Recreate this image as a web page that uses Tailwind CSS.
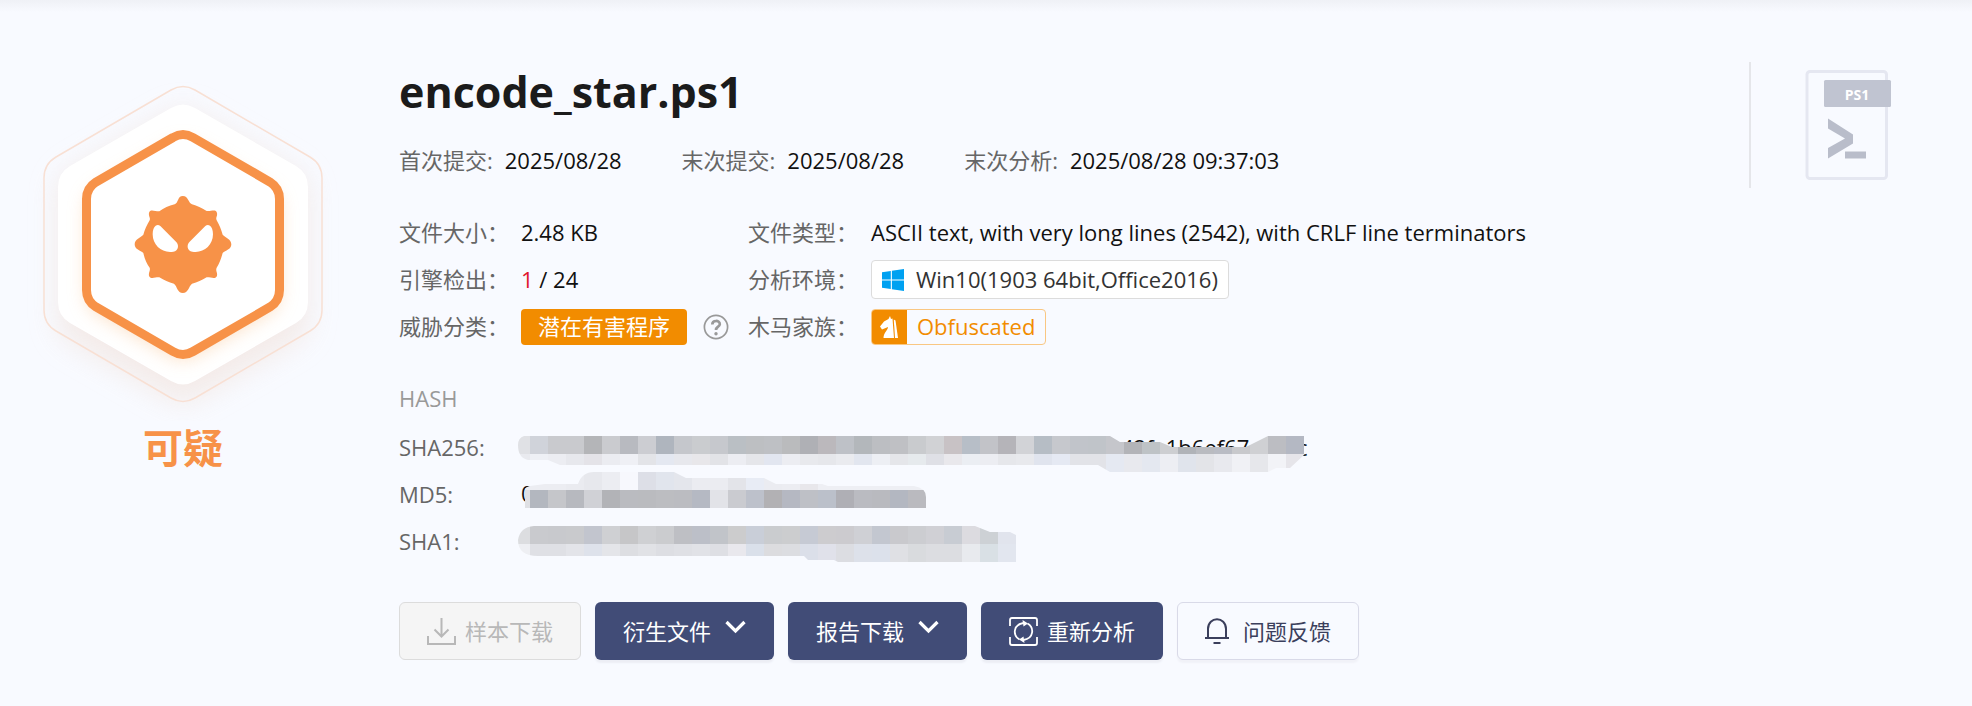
<!DOCTYPE html>
<html lang="zh-CN">
<head>
<meta charset="utf-8">
<meta name="viewport" content="width=device-width, initial-scale=1">
<title>encode_star.ps1</title>
<script src="https://cdn.jsdelivr.net/npm/@tailwindcss/browser@4"></script>
</head>
<body class="min-h-screen bg-[#f8faff] font-['Open_Sans','Noto_Sans_CJK_SC',sans-serif] text-[22px] text-[#111]">
<div class="h-3 bg-linear-to-b from-[#eff1f6] to-[#f8faff]"></div>
<div class="flex items-start">
  <aside class="flex w-[366px] shrink-0 flex-col items-center pt-[47px]">
    <svg class="w-full" viewBox="0 60 366 362" aria-hidden="true">
      <defs>
        <filter id="soft" x="-30%" y="-30%" width="160%" height="160%"><feGaussianBlur stdDeviation="14"/></filter>
        <filter id="glow" x="-30%" y="-30%" width="160%" height="160%"><feGaussianBlur stdDeviation="9"/></filter>
      </defs>
      <path d="M171 115Q183 108 195 115L296 173Q308 180 308 194V321Q308 335 296 342L195 400Q183 407 171 400L70 342Q58 335 58 321V194Q58 180 70 173Z" fill="#f2e4de" opacity=".7" filter="url(#soft)"/>
      <path d="M171 91Q183 84 195 91L310 158Q322 165 322 179V311Q322 325 310 332L195 399Q183 406 171 399L56 332Q44 325 44 311V179Q44 165 56 158Z" fill="none" stroke="#f8e0d4" stroke-width="1.5"/>
      <path d="M171 109Q183 102 195 109L296 167Q308 174 308 188V303Q308 317 296 324L195 382Q183 389 171 382L70 324Q58 317 58 303V188Q58 174 70 167Z" fill="#fff"/>
      <path d="M171 147Q183 140 195 147L268 189Q280 196 280 210V294Q280 308 268 315L195 357Q183 364 171 357L98 315Q86 308 86 294V210Q86 196 98 189Z" fill="#fbd9b8" opacity=".8" filter="url(#glow)"/>
      <path d="M173 138.500Q183 132.500 193 138.500L270 183Q279.500 189 279.500 200V291Q279.500 302 270 308L193 352.500Q183 358.500 173 352.500L96 308Q86.500 302 86.500 291V200Q86.500 189 96 183Z" fill="#fff" stroke="#f79248" stroke-width="9"/>
      <g transform="translate(120 180) scale(.3333)">
        <path fill="#f79248" d="M164 76C176 72 172 51 188.500 51C205 51 205 72 216 76C232 81 244 86 260 96C272 98 288 88 291 102C293 112 286 115 290 124C298 138 304 152 308 167C316 176 334 180 334 196C334 212 316 214 308 222C303 240 298 254 290 266C286 276 293 280 291 290C288 302 272 294 260 295C246 304 232 310 216 314C206 322 205 342 188.500 342C172 342 172 322 162 314C146 310 132 304 118 295C106 294 90 302 87 290C85 280 92 276 89 266C80 254 74 240 70 222C62 214 44 212 44 196C44 180 62 176 70 167C74 152 81 138 89 124C92 115 85 112 87 102C90 88 106 98 118 97C132 88 146 80 164 76Z"/>
        <path fill="#fff" d="M107 140Q114 135 121 141L168 188C178 197 176 216 160 218C128 224 98 200 98 166C98 152 102 144 107 140ZM270 140Q263 135 256 141L209 188C199 197 201 216 217 218C249 224 279 200 279 166C279 152 275 144 270 140Z"/>
      </g>
    </svg>
    <p class="text-[40px] leading-[54px] font-bold text-[#f79248]">可疑</p>
  </aside>

  <main class="min-w-0 flex-1 pt-[50px] pl-[33px]">
    <h1 class="text-[43px] leading-[60px] font-bold text-[#1b1b1b]">encode_star.ps1</h1>

    <dl class="mt-[18px] flex h-10 items-center gap-[60px]">
      <div class="flex gap-3"><dt class="text-[#666]">首次提交:</dt><dd>2025/08/28</dd></div>
      <div class="flex gap-3"><dt class="text-[#666]">末次提交:</dt><dd>2025/08/28</dd></div>
      <div class="flex gap-3"><dt class="text-[#666]">末次分析:</dt><dd>2025/08/28 09:37:03</dd></div>
    </dl>

    <dl class="mt-[29px] grid auto-rows-[47px] grid-cols-[122px_227px_123px_1fr] items-center whitespace-nowrap [&>dt]:text-[#666]">
      <dt>文件大小：</dt><dd>2.48 KB</dd>
      <dt>文件类型：</dt><dd>ASCII text, with very long lines (2542), with CRLF line terminators</dd>
      <dt>引擎检出：</dt><dd><span class="text-[#e0142c]">1</span> / 24</dd>
      <dt>分析环境：</dt>
      <dd class="flex"><span class="flex h-[39px] items-center gap-3 rounded-sm border border-[#dcdcdc] bg-white px-2.5 text-[#333]">
        <svg class="size-[22px]" viewBox="0 0 22 22" fill="#00a1f1" aria-hidden="true"><path d="M0 3.200L8.800 2V10.500H0ZM9.900 1.800L22 0V10.500H9.900ZM0 11.500H8.800V20L0 18.800ZM9.900 11.500H22V22L9.900 20.200Z"/></svg>Win10(1903 64bit,Office2016)</span></dd>
      <dt>威胁分类：</dt>
      <dd class="flex items-center gap-4"><span class="flex h-9 items-center rounded-sm bg-[#f28c00] px-[17px] text-white">潜在有害程序</span>
        <button type="button" aria-label="威胁分类说明"><svg class="block size-[26px]" viewBox="0 0 26 26" fill="none" stroke="#999" aria-hidden="true"><circle cx="13" cy="13" r="11.600" stroke-width="1.700"/><path d="M9.300 10.500C9.300 5.800 16.900 5.900 16.800 10.200C16.700 12.800 13 12.700 13 16" stroke-width="2.700"/><circle cx="13" cy="19.700" r="1.700" fill="#999" stroke="none"/></svg></button></dd>
      <dt>木马家族：</dt>
      <dd class="flex"><a href="#" class="flex h-9 items-stretch overflow-hidden rounded-sm border border-[#f9c783] text-[#f28c00]">
        <span class="-m-px mr-0 flex w-9 items-center justify-center bg-[#f28c00]"><svg class="h-[22px] w-[18px]" viewBox="0 0 18 22" fill="#fff" aria-hidden="true"><path d="M10 0L11 3L12.500 2.500L14 22H3.500C3.500 17 8 14 8 11L2 13.500L0 10.500L4 5.500L8.500 3Z"/><path d="M13.800 3.500L15.500 4.500L18 22H15Z"/></svg></span>
        <span class="px-2.5 leading-8">Obfuscated</span></a></dd>
    </dl>

    <h2 class="mt-[27px] mb-1.5 leading-[42px] text-[#999]">HASH</h2>
    <dl class="grid auto-rows-[47px] grid-cols-[119px_1fr] items-center [&>dt]:pb-0.5 [&>dt]:text-[#666]">
      <dt>SHA256:</dt>
      <dd><svg class="block h-[47px] w-[790px]" viewBox="518 425 790 47" font-size="22" fill="#111" aria-label="已遮盖">
        <text x="1121" y="456">42fa1b6ef67c7</text><text x="1297" y="456">c</text>
        <clipPath id="c1"><path d="M524 436H1110L1120 442H1160L1172 447H1246L1268 436H1304V455L1290 468H1276L1268 472H1110L1098 465H560L548 460H528Q518 458 518 445Q518 438 524 436Z"/></clipPath>
        <g clip-path="url(#c1)" data-y="436" data-top="e0e1e5 d0d3da c9cace c9cace b4b5b8 cacbcf b8bac0 cccdd2 afb5be c5c7cc cacccf c6c8cd babfc4 bdbfc2 bec0c4 babbbd afb0b5 bbb8bc bec1c7 b3b7bb bcbec2 bfc0c4 c9cbce d1d2d5 c8c2c5 b7bec7 c2c3c8 b5b4b9 d2d3d7 b6bdc5 c6c8cd c1c4ca c0c4c9 c5c6cb b3b4b8 bec3c6 cdced1 b0b3b8 b9bbc0 b9bcc4 c8c9cc cfd0d3 bcbdc2 b4b8c3" data-bottom="e9eaef eef0f5 ecedf2 e7e8ed e4e3e8 ebecf1 eff0f5 e3e4e8 e4e8f1 e7e8ed e8e7ea e2e3e7 ecedf2 e5e6ea e2e6f0 ecedf2 e8e9ed e6e7eb eaebef e2e6ef edeff4 e5e6ea e6eaed dfe0e6 e9e8ec ebeef3 ecedf2 e6e7eb e8e9ed e0e4ee e5e9f3 e2e3e8 e2e3e8 e5e9f2 e8e9ee e4e8f0 edeef3 e0e4ec e3e4e8 e8e9ee f0f1f5 e6e7eb f2f3f7 e6e5ea"></g>
      </svg></dd>
      <dt>MD5:</dt>
      <dd><svg class="block h-[47px] w-[790px]" viewBox="518 472 790 47" font-size="22" fill="#111" aria-label="已遮盖">
        <text x="521" y="502">0</text>
        <clipPath id="c2"><path d="M525 508V490Q525 487 530 486L545 484H578Q582 472 594 472H674L686 478H764L776 484H822L828 486H914Q926 488 926 497V508Z"/></clipPath>
        <g clip-path="url(#c2)" data-y="472" data-top="ecedf2 ecedf2 ecedf2 eaebf0 e7e8ed ecedf2 f7f8fd dddfe7 e1e5ed e4e6ec ebecf1 ebecf1 e3e4e9 e8ecf5 ebecf1 ecedf2 e8e7eb eeeff4 eeeff4 eeeff4 eeeff4 eeeff4 eeeff4" data-bottom="dfe0e4 b3b7bf c5c6ca b7b9bf d0d1d6 b2b3b7 babbc0 babbbf bcbdc1 bbbcc1 b5b9c3 e2e3e8 cacbd0 bdc1cb b2b1b4 b5b8c2 bec0c6 bbc0ca afafb5 babbc1 b9babf b3b7c1 bababf"></g>
      </svg></dd>
      <dt>SHA1:</dt>
      <dd><svg class="block h-[47px] w-[790px]" viewBox="518 519 790 47" aria-label="已遮盖">
        <clipPath id="c3"><path d="M534 526H975L990 532H1010L1016 535V562H838L834 560H808L804 556H538Q518 556 518 540Q520 527 534 526Z"/></clipPath>
        <g clip-path="url(#c3)" data-y="526" data-top="dcdde0 c9cace c8c9cd c9cacd c2c5ce cfd0d3 c6c6c8 cfd0d3 cbcccf bebfc4 bcbfc8 c1c4c9 cccccd c9ced8 cacccf cccdcf c6cad4 cdcccf cccbcf cfd0d5 c3c7d0 c9c9cd cccdd1 d0d0d5 c8ccd3 dcdbe0 cdd1d5 e1e4ed" data-bottom="eeeff3 dfe0e5 dfe0e5 e3e4e9 dee2eb e4e5e9 dddee2 e1e2e6 dddee3 dfe0e5 e1e2e7 dedfe4 e9e8ed dae0ea dcdcdf dcdde1 dbdfe9 e0e1ea dcdde2 dde1ea dce1eb dfe0e4 d9dbde dcdde1 dcdde1 e8eaee d9e0e5 e2e6ef"></g>
      </svg></dd>
    </dl>

    <div class="mt-9 flex gap-3.5 pb-10">
      <button type="button" disabled class="flex h-[58px] items-center gap-[9px] rounded-md border border-[#dcdcdc] bg-[#f5f5f5] px-[27px] text-[#b8b8b8]">
        <svg class="size-[29px]" viewBox="0 0 29 29" fill="none" stroke="#b8b8b8" stroke-width="2" aria-hidden="true"><path d="M1 19V27H28V19" /><path d="M14.500 1V19M7.500 12.500L14.500 19.500L21.500 12.500"/></svg>样本下载</button>
      <button type="button" class="flex h-[58px] items-center gap-3.5 rounded-md bg-[#414c77] px-7 text-white shadow-[0_3px_2px_#eceef5]">衍生文件
        <svg class="mb-2 h-[14px] w-[21px]" viewBox="0 0 21 14" fill="none" stroke="#fff" stroke-width="3.200" aria-hidden="true"><path d="M1.500 2L10.500 11L19.500 2"/></svg></button>
      <button type="button" class="flex h-[58px] items-center gap-3.5 rounded-md bg-[#414c77] px-7 text-white shadow-[0_3px_2px_#eceef5]">报告下载
        <svg class="mb-2 h-[14px] w-[21px]" viewBox="0 0 21 14" fill="none" stroke="#fff" stroke-width="3.200" aria-hidden="true"><path d="M1.500 2L10.500 11L19.500 2"/></svg></button>
      <button type="button" class="flex h-[58px] items-center gap-[9px] rounded-md bg-[#414c77] px-7 text-white shadow-[0_3px_2px_#eceef5]">
        <svg class="size-[29px]" viewBox="0 0 29 29" fill="none" stroke="#fff" stroke-width="1.800" aria-hidden="true"><path d="M1 9V3Q1 1 3 1H26Q28 1 28 3V9M1 20V26Q1 28 3 28H26Q28 28 28 26V20"/><path d="M10.500 22.500C3.500 18.500 4 7.500 14.500 6M18.500 6.500C25.500 10.500 25 21.500 14.500 23"/><path d="M13.500 3L19 6.500L14.500 9.500ZM15.500 26L10 22.500L14.500 19.500Z" fill="#fff" stroke="none"/></svg>重新分析</button>
      <button type="button" class="flex h-[58px] items-center gap-3.5 rounded-md border border-[#d9dae8] bg-[#f8faff] px-[27px] text-[#3b3f5c] shadow-[0_3px_2px_#f1f2f8]">
        <svg class="h-[26px] w-6" viewBox="0 0 24 26" fill="none" stroke="#3b3f5c" stroke-width="2" aria-hidden="true"><path d="M0 20H24M3 20V11C3 -2 21 -2 21 11V20M8.500 25H15.500"/></svg>问题反馈</button>
    </div>
  </main>

  <div class="mt-[50px] h-[126px] w-[223px] shrink-0 border-l-2 border-[#e5e6ea] pt-2 pl-[54px]">
    <svg class="h-[110px] w-[88px]" viewBox="1805 70 88 110" role="img" aria-label="PS1">
      <rect x="1807" y="71.500" width="79.500" height="107" rx="3" fill="none" stroke="#e5e7f1" stroke-width="3"/>
      <rect x="1824" y="80" width="67" height="27" rx="1.500" fill="#c0c4d1"/>
      <text x="1857" y="99.500" text-anchor="middle" font-size="14" font-weight="700" fill="#fff">PS1</text>
      <path d="M1828 118.500L1853 134.500V143.500L1828 158.500V148L1845 138.500L1828 128.500ZM1845 151.500H1866V158.500H1845Z" fill="#b9bdca"/>
    </svg>
  </div>
</div>
<script>
  // Paint the two tile strips that cover each hash value.
  for (const g of document.querySelectorAll('g[data-top]')) {
    [g.dataset.top, g.dataset.bottom].forEach((row, r) => row.split(' ').forEach((color, i) => {
      const tile = document.createElementNS('http://www.w3.org/2000/svg', 'rect');
      const attrs = { x: 512 + i * 18, y: Number(g.dataset.y) + r * 18, width: 18, height: 18, fill: '#' + color, 'shape-rendering': 'crispEdges' };
      for (const [k, v] of Object.entries(attrs)) tile.setAttribute(k, v);
      g.append(tile);
    }));
  }
</script>
</body>
</html>
